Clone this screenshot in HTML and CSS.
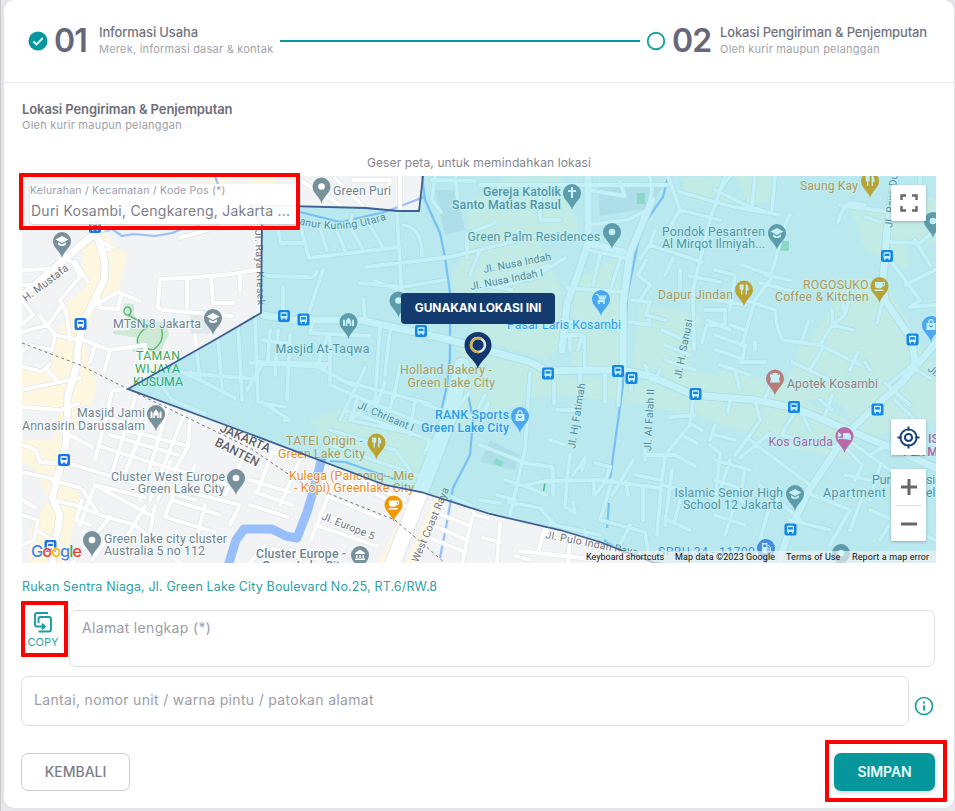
FILE: index.html
```html
<!DOCTYPE html>
<html lang="id">
<head>
<meta charset="utf-8">
<title>Lokasi Pengiriman &amp; Penjemputan</title>
<link rel="stylesheet" href="styles.css">
</head>
<body>
<main class="card">
  <header class="stepper">
    <svg class="step-icon" viewBox="0 0 20 20"><circle cx="10" cy="10" r="9.5" fill="#05979c"/><path d="M5.3 10.3l3.2 3.2 6.3-6.5" fill="none" stroke="#fff" stroke-width="1.8"/></svg>
    <span class="step-no">01</span>
    <div class="step-text step-one"><strong>Informasi Usaha</strong><small>Merek, informasi dasar &amp; kontak</small></div>
    <i class="step-line"></i>
    <svg class="step-icon" viewBox="0 0 20 20"><circle cx="10" cy="10" r="8.3" fill="#fff" stroke="#15a0a4" stroke-width="1.9"/></svg>
    <span class="step-no">02</span>
    <div class="step-text step-two"><strong>Lokasi Pengiriman &amp; Penjemputan</strong><small>Oleh kurir maupun pelanggan</small></div>
  </header>

  <section class="content">
    <div class="heading"><h1>Lokasi Pengiriman &amp; Penjemputan</h1><p>Oleh kurir maupun pelanggan</p></div>
    <p class="hint">Geser peta, untuk memindahkan lokasi</p>

    <div class="map">
      <svg class="map-canvas" viewBox="22 176 914 387">
        <defs>
          <path id="drop" d="M0 17C-1.5 10-9 7-9 0A9 9 0 0 1 9 0C9 7 1.5 10 0 17Z"/>
          <g id="dot"><use href="#drop"/><circle r="3.3" fill="#fff"/></g>
          <g id="school"><use href="#drop"/><path d="M-6.500-1.500L0-5 6.500-1.500 0 2ZM-4 1.200V3.500Q0 6.500 4 3.500V1.200L0 3.400Z" fill="#fff"/></g>
          <g id="mosque"><use href="#drop"/><path d="M-5.500 4V-1.500l1-1.500 1 1.500V4ZM3.500 4V-1.500l1-1.500 1 1.500V4ZM-2.800 4V0Q-2.500-2 0-4.500 2.500-2 2.800 0V4H1.200V1.500h-2.400V4Z" fill="#fff"/></g>
          <g id="church"><use href="#drop"/><path d="M-1-6H1V-3H4V-1H1V5H-1V-1H-4V-3H-1Z" fill="#fff"/></g>
          <g id="fork"><use href="#drop"/><path d="M-3.700-5V-1.500Q-3.700 0-2.300 0T-1-1.500V-5M-2.300-5V5M2.300 5V-4.500Q4-4 4 0H2.300" fill="none" stroke="#fff" stroke-width="1.300"/></g>
          <g id="cup"><use href="#drop"/><path d="M-4.500-4H5.500V-1Q5.500 .500 3 .500 2.500 2.300 .500 2.300H-1.500Q-4.500 2.300-4.500-.500ZM3.300-3V-.700H4.500V-3ZM-5 3.500H4V5H-5Z" fill="#fff"/></g>
          <g id="cart"><use href="#drop"/><path d="M-5.500-4.500h2l.8 1.500H5L3 1.300H-2.200L-3 2.600H4" fill="none" stroke="#fff" stroke-width="1.200"/><path d="M-2.500-2.500H4L2.600.6H-1.500Z" fill="#fff"/><circle cx="-2" cy="4.300" r="1" fill="#fff"/><circle cx="3" cy="4.300" r="1" fill="#fff"/></g>
          <g id="bag"><use href="#drop"/><path d="M-4.500-2H4.500V5H-4.500Z" fill="#fff"/><path d="M-2.200-2Q-2.200-5.300 0-5.300T2.200-2" fill="none" stroke="#fff" stroke-width="1.200"/><path d="M-2 .5Q0 3.500 2 .5" fill="none" stroke="#4285f4"/></g>
          <g id="bed"><use href="#drop"/><path d="M-6-4V4M-6 2.300H6V4M-5-2.500a1.500 1.500 0 1 0 .1 0M-1-2.500H4Q6-2.500 6 0V1.500H-1Z" fill="#fff" stroke="#fff" stroke-width=".8"/></g>
          <g id="med"><use href="#drop"/><path d="M-5-4H-2L-3-5.500H3L2-4H5V-2L4 0 5 4H-5L-4 0-5-2Z" fill="#fff"/></g>
          <g id="fuel"><use href="#drop"/><path d="M-4-5H1.500V5H-4Z" fill="#fff"/><path d="M2-3L4.500-1V3.500H3V0H1" fill="none" stroke="#fff"/><path d="M-2.800-3.500H.3V-1H-2.800Z" fill="#5b7bdc"/></g>
          <g id="museum"><use href="#drop"/><path d="M-5-2L0-5.500 5-2V-1H-5ZM-4 0h1.500v3H-4ZM-.7 0h1.500v3H-.7ZM2.500 0H4v3H2.500ZM-5 3.600H5V5H-5Z" fill="#fff"/></g>
          <g id="bus"><rect x="-6" y="-6" width="12" height="12" rx="2" fill="#1a73e8"/><path d="M-3.500-3.500Q0-4.500 3.500-3.500V2.500H2.800V4H1.500V2.500H-1.500V4H-2.800V2.500H-3.500Z" fill="#fff"/><path d="M-2.400-2.300H2.400V0H-2.400Z" fill="#1a73e8"/></g>
          <g id="minor">
            <path d="M22 270L52 269M60 258L73 262 80 277 60 300 66 312 70 340M75 262L88 282M22 285L44 285M100 252L112 248M102 242L110 246M160 279L187 278 232 274 262 269M160 279L158 306Q158 310 164 310L232 316M187 279V308M211 277L213 303 233 303M240 273V290M180 238L225 225 262 222M98 296L100 308 118 309 121 296M90 308L118 292 140 301M62 305L48 325 22 332M40 316L55 335 80 340M55 335L52 350 30 345 22 352M78 338L110 350 145 345M110 350L104 372M95 345L90 362M145 348L150 366M22 300L33 315 22 324M22 366L42 372 50 364"/>
            <path d="M22 390L50 384 80 378M22 407L60 410 78 404M48 370L58 382M125 389L112 391 106 418 95 460M22 428L110 426 188 446M22 445L36 450 40 462 75 465 100 473 150 487 195 500M22 472L58 480M52 500L75 505 100 515 135 525M82 500L76 520 90 525M135 398L113 470M150 412L122 480M168 408L140 500M185 412L150 500M106 418L135 425M102 447L175 470M110 435L178 455M190 420L188 446 175 470M83 490L97 512M95 485L150 515M80 525L95 485 145 497M22 515L38 520 34 540 22 545M22 500L36 508M36 530L60 545M60 430L92 447M52 480L80 488M145 506L125 540M155 506L150 532M170 462L158 500M180 472L170 505M110 517L72 563M135 525L180 563M92 560L110 535M262 402L290 420 284 420M247 390L262 365M155 376L172 400 205 414M160 362L200 380 235 398M195 335L200 380M218 338L222 390M238 325L242 400M255 316L258 402M175 372L255 379M250 363L325 367M262 340L290 344M258 402L285 407"/>
            <path d="M175 485L172 500 220 515M178 470L225 484M170 502L165 517 215 532M188 492L240 505M195 465L190 480M205 505L195 545M240 505L230 525M250 445L225 495M260 448L290 458M250 480L290 492M255 492L292 505M250 505L288 517M272 453L258 490M300 460L280 505M300 555L300 563M330 492L311 540M327 496L380 518M320 513L345 523M315 525L377 546M345 482L410 508M340 468L395 495M365 483L405 500M265 545L250 563M272 548L300 557M290 550L320 560M500 523L497 563M483 538L500 542M544 530L538 553 520 551M538 553L600 560M570 538L568 563M530 560L515 556M452 497L470 505 475 515M437 513L470 526M432 525L467 540M430 538L465 552M472 518L462 563M474 515L488 518"/>
            <path d="M278 230L281 243 305 243M300 225L309 258 400 247M320 228L327 250M336 229L345 250M352 229L362 248M370 226L383 247M397 213L403 320M268 276L308 277Q315 279 317 271M323 270L307 318M283 288V318M366 267L450 257 540 235M360 283L403 287 445 280M375 281L405 292M404 225Q422 228 422 255M353 180H390L388 195M300 180L340 205M335 178L362 205M435 176L432 200 441 212M432 180L475 181M400 176V211M350 225L352 215M363 298L365 318M313 320L310 333 370 336M270 330L268 360M290 335L287 400M255 362L330 364M380 327L375 400 350 420 410 433M390 330L385 375M365 368L340 420M400 365L394 398M278 330L275 375M330 338L330 385 365 400 430 427M340 380L430 404M320 368L352 385M350 420L358 398M318 363L328 335M425 404L440 410M385 383L375 408M395 390L388 415M415 400L410 435M330 430L395 450 410 470M345 410L430 440 425 453M325 443L430 480M470 392L455 410M485 395L475 415M465 415L482 420 488 403"/>
            <path d="M667 185L480 185M588 190L625 196 620 182M540 185L540 220 560 220M588 225L627 220 648 210 652 190 650 176M588 250L625 258M600 255L593 285M620 260L608 297M567 288L623 292M567 330L560 345M570 337L570 350M578 350L582 335 562 335 562 345M584 337L585 370M480 285L512 290M562 320L620 330M500 287L530 278M515 283L548 265M530 280L565 258M480 250L470 275M495 223L467 234 467 258M455 176L458 202M500 185L495 198 515 210M668 176L680 210 720 220M680 192L730 206 767 213M680 210L667 232M725 176L710 220 700 260 693 290 694 350M655 230L650 245 702 262M650 245L640 258M673 258L665 275M680 270V290M690 276L720 282M646 260L638 275 650 285 640 300M632 300L650 302 646 315 665 320M648 315L650 325 630 322M705 310H725V325H707L702 342M707 320L730 330M665 345L690 355M665 360L695 370M662 330L680 338M554 380V404M605 375V402M580 370V383M620 375L618 405M557 410H580M631 383V390M550 440L565 445M660 370L655 382M645 365L651 380M530 373L525 450 510 515M480 445L525 463 552 467 553 495M553 468L553 492M505 480L530 488 546 495M497 495L515 500M526 485L545 481 600 480 660 488M570 455L567 480 565 508M568 508L575 513 573 502M582 470L585 458 573 475M595 463L610 467 605 482 595 495M594 482V495M633 460L620 482 612 495M626 482L628 495M645 450V460M645 455L675 455 695 466M694 395L690 425 665 455 662 478 657 535M636 475L660 480M663 485L720 500M672 470L665 525M612 480L600 520 645 532 650 563M630 525L620 545M508 502L540 508 555 525 600 535M480 500L500 503M552 520L545 535M670 417L695 415M693 425L702 430M685 437L697 443M715 425L710 440M710 445L720 453M643 488V520M585 530L587 545M668 520L690 530M680 500L675 520"/>
            <path d="M715 190L750 207 778 215M730 176L720 190M755 176L752 208M775 176L772 210M790 215L783 230 770 280 755 300 742 345M760 283L792 291M790 280L765 275M742 265L770 275M715 270L735 275 730 310M715 300L745 305M745 300L775 310 777 325M730 325L745 330M777 325L782 340 820 345 860 365M820 345L832 325 845 315 850 295M832 325L853 330M833 325L832 310M845 315L842 300 852 285M802 340L808 322M745 345L742 362M755 350V342M850 370L858 352M870 370L865 362M823 348L810 370M792 362L830 380M742 345L715 335M740 362L765 362M883 300L877 323M865 205L850 203Q842 208 838 222M840 205L890 212M865 217L880 222M920 176V195L905 210M885 242L920 243 935 230M890 260L920 300 910 307 935 305M905 285L935 270M915 240L930 265M915 363L890 383M912 367L930 378M720 365L750 375M735 370L740 390M775 375L765 398M755 400L760 420 750 435 735 455M795 413L785 428 782 435 810 442 848 450 862 465 855 480M770 433L740 458M715 435L735 440M750 440L810 485M715 460L750 470M720 455L715 500M730 460L720 490M745 468L740 500 760 510M715 480L745 490M760 485L800 520M808 493L850 510 830 545M790 520L830 530M848 440L890 470 935 480M870 455L905 435 935 445M880 465L870 500M845 475L870 480M865 490L850 530M900 475L915 530 935 540M870 510L905 525M905 500L880 540M770 505L760 540M735 505L725 535M715 515L745 525M885 383L910 405M895 400L915 420M820 400L832 410M825 415L832 395M800 410L810 430M730 400L728 412M716 350L740 358"/>
          </g>
          <g id="major">
            <path d="M95 232Q108 260 104 280L85 320Q76 345 77 365L68 395 66 445 58 475 52 498 60 515 52 563"/>
            <path d="M263 315L293 320 360 320 397 328 450 340 530 362 547 371 590 370 623 370 653 377 693 395 755 400 795 408 848 430 892 448 936 468"/>
            <path d="M895 176L887 230 883 280 885 300 912 340 915 363"/>
            <path d="M936 343L902 382 848 432 808 492 788 535 778 563"/>
            <path d="M588 176V243L577 277 567 303 562 350"/>
            <path d="M588 243L623 252"/><path d="M652 200L630 253 623 303V370"/>
            <path d="M22 296L95 233 130 210"/>
          </g>
          <path id="area" d="M423 176L419 211H398L366 208 250 205 262 225 261 313 218 338 128 389 250 434 385 485 421 492 490 514 560 530 600 542 636 556 655 563 960 590V160H423Z"/>
        </defs>
        <path fill="#f1f3f4" d="M22 176H936V563H22Z"/>
        <g class="built">
          <path d="M105 232L118 250 128 253 122 275 118 292 102 298 92 320 84 335 88 360 97 385 93 402 78 408 74 435 60 475 80 495 75 520 66 563H30V530L48 500 36 470 22 462V440L55 440 58 410 22 405V368H52L55 335 68 318 68 300 85 290 82 250Z"/>
          <path d="M250 176H262L275 176V190H250ZM190 176H240L220 184Z"/>
          <path d="M411 495L390 540 378 563H398L425 500ZM436 496L448 490 418 563H405Z"/>
        </g>
        <path class="built-soft" d="M466 204L505 178 560 176 580 230 540 245 560 285 563 345 545 360 480 340 450 280 470 240ZM460 340L530 362 560 376 720 385 795 398 848 420 860 440 850 460 790 448 740 430 700 417 620 400 540 395 450 435 420 490 375 482 335 468 310 420 340 410 430 435 450 390ZM575 280L620 255 620 370 570 370ZM632 370L640 302 700 315 690 370 760 385 735 395 660 380ZM680 178L720 176 730 205 690 200ZM735 176H775V200L750 205ZM850 205L900 212 910 270 865 250ZM845 278L885 280 912 330 936 370V420L860 440 840 400 780 398 792 370 830 310ZM848 320L895 310 910 355 880 375ZM715 370L795 385 815 410 740 400ZM800 345L860 365 840 405 790 385ZM900 190L936 200V245L895 235Z"/>
        <path fill="#e2e8eb" d="M598 188L665 183 650 208 600 216ZM490 440L520 455 515 470 480 462ZM435 190L455 190 465 230 445 235ZM190 310h20v24h-20Z"/>
        <g fill="#ceead6"><path d="M124 303L134 304V317L166 323 169 335 160 352H132L138 338 113 334V331L130 330Z"/><path d="M637 193h8v11h-8ZM780 241h9v10h-9ZM496 458l8 4-3 5-8-4Z" fill="#b5dfc0"/></g>
        <path d="M127 315a3.500 4 0 1 1 1 0L148 326Q132 338 140 347L153 350Q167 340 160 325M545 483L543 494" fill="none" stroke="#5bb974" stroke-width="1.500"/>
        <g class="water"><path d="M422 176L425 200 440 233 445 257 450 293V357L447 385 442 408M668 176L663 197 643 225 637 247 627 297 623 385 615 442 610 480M609 503L607 528M604 540L613 546M330 461L345 462 397 480M300 212L340 222 385 212 424 197M95 234L112 229 122 236 134 234 155 236 172 233 185 228 200 226M215 176L218 184M468 393L473 420 470 455 453 488 447 522 440 558M44 285L28 292" stroke-width="2.200"/></g>
        <g fill="none" stroke-linecap="round" stroke-linejoin="round">
          <path d="M462 365L450 415 427 475 393 563" stroke="#e3e5e8" stroke-width="17"/>
          <use href="#minor" stroke="#e1e4e8" stroke-width="5"/>
          <use href="#major" stroke="#dfe2e6" stroke-width="8.500"/>
          <use href="#minor" stroke="#fff" stroke-width="3.800"/>
          <use href="#major" stroke="#fff" stroke-width="7"/>
          <path d="M462 365L450 415 427 475 393 563" stroke="#fff" stroke-width="15"/>
        </g>
        <g class="water"><path d="M322 458L313 492 307 512 297 538 286 536 272 529 244 529 236 540 228 566" stroke-width="9"/></g>
        <path d="M22 343L80 365 128 389 250 448 300 482 395 520 445 563" fill="none" stroke="#777b80" stroke-dasharray="3 3"/>

        <g class="street">
          <text transform="translate(26 302) rotate(-37)" textLength="54">H. Mustafa</text>
          <text transform="translate(255 230) rotate(88)" textLength="75">Jl. Raya Kresek</text>
          <path id="janur" d="M299 224Q340 236 388 219" fill="none" stroke="none"/><text textLength="89"><textPath href="#janur">anur Kuning Utara</textPath></text>
          <text transform="translate(484 273) rotate(-11)" textLength="69">Jl. Nusa Indah</text>
          <text transform="translate(471 290) rotate(-11)" textLength="74">Jl. Nusa Indah I</text>
          <text transform="translate(681 379) rotate(-79)" textLength="60">Jl. H. Sanusi</text>
          <text transform="translate(575 449) rotate(-81)" textLength="66">Jl. Hj Fatimah</text>
          <text transform="translate(651 451) rotate(-87)" textLength="62">Jl. Al Falah II</text>
          <text transform="translate(357 408) rotate(23)" textLength="60">Jl. Chrisant I</text>
          <text transform="translate(321 519) rotate(22)" textLength="56">Jl. Europe 5</text>
          <text transform="translate(418 563) rotate(-67)" textLength="80">West Coast Raya</text>
          <text transform="translate(545 538) rotate(11)" textLength="94">Jl. Pulo Indah Raya</text>
          <text transform="translate(892 228) rotate(-84)" textLength="61">Jl. Raya Duri</text>
          <text transform="translate(927 370) rotate(40)">Jl. K</text>
          <g class="city"><text transform="translate(219 431) rotate(24)" textLength="54">JAKARTA</text><text transform="translate(214 445) rotate(27)" textLength="48">BANTEN</text></g>
        </g>

        <g class="label grey">
          <text x="333" y="195" textLength="58">Green Puri</text>
          <text x="483" y="196" textLength="78" class="mid">Gereja Katolik</text><text x="452" y="208.500" textLength="109" class="mid">Santo Matias Rasul</text>
          <text x="467.500" y="241" textLength="132.500">Green Palm Residences</text>
          <text x="662" y="235.500" textLength="103">Pondok Pesantren</text><text x="662" y="248" textLength="103">Al Mirqot Ilmiyah...</text>
          <text x="113" y="327.500" textLength="88">MTsN 8 Jakarta</text>
          <text x="275.500" y="352.500" textLength="94">Masjid At-Taqwa</text>
          <text x="77" y="417" textLength="68">Masjid Jami</text><text x="22" y="430" textLength="123">Annasirin Darussalam</text>
          <text x="111" y="480.500" textLength="114">Cluster West Europe</text><text x="131" y="493" textLength="93.500">- Green Lake City</text>
          <text x="104" y="543" textLength="123">Green lake city cluster</text><text x="104" y="555" textLength="101">Australia 5 no 112</text>
          <text x="256" y="558" textLength="90" class="mid">Cluster Europe -</text><text x="262" y="570" textLength="84" class="mid">Green Lake City</text>
          <text x="674.500" y="497" textLength="108.500">Islamic Senior High</text><text x="683" y="509" textLength="100">School 12 Jakarta</text>
          <text x="872" y="484">Puri</text><text x="926" y="484">sid</text><text x="823" y="496.500" textLength="74">Apartment b</text><text x="926" y="496.500">el</text>
        </g>
        <g class="label green"><text x="136" y="360" textLength="44">TAMAN</text><text x="135" y="373" textLength="45">WIJAYA</text><text x="133" y="385.500" textLength="50">KUSUMA</text></g>
        <g class="label orange">
          <text x="800" y="190" textLength="58">Saung Kay</text><text x="658" y="298.500" textLength="75">Dapur Jindan</text>
          <text x="803" y="288.500" textLength="65.500">ROGOSUKO</text><text x="775" y="301" textLength="93.500">Coffee &amp; Kitchen</text>
          <text x="400" y="374" textLength="92">Holland Bakery -</text><text x="407.500" y="386.500" textLength="87.500">Green Lake City</text>
          <text x="286" y="445" textLength="77">TATEI Origin -</text><text x="278" y="458" textLength="87">Green Lake City</text>
          <text x="289" y="480" textLength="125">Kulega (Pancong - Mie</text><text x="294" y="492" textLength="120">- Kopi) Greenlake City</text>
        </g>
        <g class="label blue"><text x="507" y="329" textLength="114">Pasar Laris Kosambi</text><text x="435" y="419" textLength="74" class="mid">RANK Sports</text><text x="421" y="431.500" textLength="88" class="mid">Green Lake City</text><text x="658" y="556" textLength="97" fill="#5b7bdc">SPBU 34 - 11700</text></g>
        <text class="label red" x="787" y="387.500" textLength="91">Apotek Kosambi</text>
        <g class="label pink"><text x="768.500" y="445.500" textLength="64.500">Kos Garuda</text><text x="928" y="443" class="mid">IS</text><text x="903" y="456" class="mid" textLength="35">PER M</text></g>

        <g fill="#78909c">
          <use href="#school" x="62" y="241"/><use href="#school" x="213" y="318"/><use href="#dot" x="321.500" y="186.500"/><use href="#dot" x="398.500" y="300.500"/><use href="#mosque" x="348.500" y="322"/><use href="#church" x="572" y="193"/><use href="#dot" x="612" y="232"/><use href="#school" x="777" y="233"/><use href="#dot" x="933" y="221"/><use href="#school" x="795" y="494"/><use href="#mosque" x="156" y="414"/><use href="#dot" x="236" y="478"/><use href="#dot" x="92" y="540"/><use href="#museum" x="360" y="555"/><use href="#dot" x="841" y="553"/>
        </g>
        <g fill="#f29900"><use href="#fork" x="870" y="181"/><use href="#fork" x="744" y="289.500"/><use href="#cup" x="879.500" y="286"/><use href="#fork" x="376.500" y="442.500"/><use href="#cup" x="393.500" y="504.500"/></g>
        <g fill="#5f9ffa"><use href="#cart" x="601" y="299"/><use href="#bag" x="520" y="416"/><use href="#bag" x="931" y="325"/></g>
        <use href="#med" x="775" y="378.500" fill="#ee675c"/><use href="#bed" x="844.500" y="436" fill="#ee4f9a"/><use href="#fuel" x="766" y="548" fill="#5b7bdc"/>
        <g><use href="#bus" x="80.500" y="324"/><use href="#bus" x="284" y="316"/><use href="#bus" x="303.500" y="319.500"/><use href="#bus" x="421" y="331"/><use href="#bus" x="548" y="373.500"/><use href="#bus" x="618" y="371"/><use href="#bus" x="631.500" y="378"/><use href="#bus" x="695.500" y="394"/><use href="#bus" x="794" y="407"/><use href="#bus" x="877.500" y="409.500"/><use href="#bus" x="887" y="256"/><use href="#bus" x="912.500" y="339.500"/><use href="#bus" x="790.500" y="529.500"/><use href="#bus" x="64" y="460"/><use href="#bus" x="50.500" y="546"/><use href="#bus" x="95" y="227"/></g>
        <use href="#area" fill="#09c4dc" fill-opacity=".24" stroke="#3f5f92" stroke-width="1.800"/>
        <g transform="translate(478 345)"><path d="M0 24C-2 15-13.500 11-13.500-0A13.500 13 0 0 1 13.500 0C13.500 11 2 15 0 24Z" fill="#12376c"/><circle r="7" fill="#12376c" stroke="#dfe8ea" stroke-width="2.600"/><path d="M3.500-6A7 7 0 1 0 1 7" fill="none" stroke="#d3b552" stroke-width="2.400"/></g>
      </svg>
      <div class="area-field"><label>Kelurahan / Kecamatan / Kode Pos (*)</label><span>Duri Kosambi, Cengkareng, Jakarta ...</span></div>
      <button class="use-location">GUNAKAN LOKASI INI</button>
      <button class="map-btn fullscreen"><svg viewBox="0 0 18 18"><path d="M1.500 6V1.500H6M12 1.500h4.500V6M16.500 12v4.500H12M6 16.500H1.500V12" fill="none" stroke="#666" stroke-width="2.400"/></svg></button>
      <button class="map-btn locate"><svg viewBox="0 0 24 24"><g fill="none" stroke="#174579"><circle cx="12" cy="12" r="8.500" stroke-width="2"/><circle cx="12" cy="12" r="3.700" stroke-width="2.200"/><path d="M12 .500V5M12 19v4.500M.500 12H5M19 12h4.500" stroke-width="2"/></g></svg></button>
      <div class="zoom"><svg viewBox="0 0 16 16"><path d="M0 8H16M8 0V16" stroke="#666" stroke-width="3"/></svg><i></i><svg viewBox="0 0 16 16"><path d="M0 8H16" stroke="#666" stroke-width="3"/></svg></div>
      <div class="google"><b>G</b><b>o</b><b>o</b><b>g</b><b>l</b><b>e</b></div>
      <div class="credits"><span class="c1">Keyboard shortcuts</span><span class="c2">Map data ©2023 Google</span><span class="c3">Terms of Use</span><span class="c4">Report a map error</span></div>
    </div>

    <p class="address">Rukan Sentra Niaga, Jl. Green Lake City Boulevard No.25, RT.6/RW.8</p>
    <div class="row full-address">
      <button class="copy"><svg viewBox="0 0 18 21"><path d="M14 1H3Q1 1 1 3V12.500Q1 14.500 3 14.500H10.500M8 11.800L10.800 14.500 8 17.200M4.500 11V7Q4.500 5 6.500 5H15Q17 5 17 7V17.500Q17 19.500 15 19.500H4.500" fill="none" stroke="#179fa3" stroke-width="1.900"/></svg><span>COPY</span></button>
      <div class="field area">Alamat lengkap (*)</div>
    </div>
    <div class="row details">
      <div class="field line">Lantai, nomor unit / warna pintu / patokan alamat</div>
      <svg class="info" viewBox="0 0 20 20"><circle cx="10" cy="10" r="8.500" fill="none" stroke="#16a0a4" stroke-width="1.700"/><path d="M10 9.200V14.500M10 5.500V7.500" stroke="#16a0a4" stroke-width="1.900"/></svg>
    </div>
    <footer class="row actions"><button class="back">KEMBALI</button><button class="save">SIMPAN</button></footer>
  </section>
</main>
<i class="mark mark-area"></i><i class="mark mark-copy"></i><i class="mark mark-save"></i>
</body>
</html>
```
FILE: styles.css
```css
* { box-sizing: border-box; }
body { margin: 0; width: 955px; height: 811px; overflow: hidden; position: relative; background: #e8e8ec; border-left: 1px solid #c9c9ce; font-family: Inter, "Liberation Sans", sans-serif; color: #6e7080; }
p, h1 { margin: 0; }
button { font-family: inherit; padding: 0; border: 0; cursor: pointer; }
svg { display: block; }
.card { margin: 0 1px 0 3px; height: 808px; background: #fff; border-radius: 10px; box-shadow: 0 0 3px #d5d5db; }

.stepper { height: 83px; border-bottom: 1px solid #e9e9ec; padding: 0 0 0 24px; display: flex; align-items: center; }
.step-icon { width: 20px; height: 20px; flex: none; }
.step-no { font-size: 32px; line-height: 40px; font-weight: 600; color: #65677b; width: 43px; margin-left: 6px; letter-spacing: -.8px; flex: none; }
.step-text { display: flex; flex-direction: column; white-space: nowrap; flex: none; padding-bottom: 2px; }
.step-text strong { font-size: 13px; line-height: 17px; font-weight: 500; color: #73747f; letter-spacing: -.13px; }
.step-text small { font-size: 11px; line-height: 16px; color: #a2a3aa; letter-spacing: .23px; }
.step-one { width: 175px; margin-left: 2px; }
.step-two { margin-left: 5px; }
.step-line { width: 360px; height: 2px; background: #05979c; margin: 0 6px 0 6px; flex: none; }

.content { padding: 0 18px; }
.heading { padding-top: 18px; height: 71px; }
.heading h1 { font-size: 13px; line-height: 17px; font-weight: 600; color: #6d6e7a; letter-spacing: -.09px; }
.heading p { font-size: 11px; line-height: 15px; color: #a0a1a8; letter-spacing: .23px; }
.hint { height: 22px; line-height: 17px; font-size: 12px; letter-spacing: .12px; text-align: center; color: #85868e; }

.map { position: relative; height: 387px; overflow: hidden; width: 914px; }
.map-canvas { width: 914px; height: 387px; }
.built { fill: #fef7e0; }
.built-soft { fill: #fdf8e8; }
.water { fill: none; stroke: #98bffb; stroke-linejoin: round; }
.label, .street { font-family: Roboto, sans-serif; font-size: 12.3px; paint-order: stroke; stroke: rgba(255,255,255,.75); stroke-width: 2px; stroke-linejoin: round; }
.street { font-size: 10.5px; fill: #70757a; }
.city { font-size: 12.5px; font-weight: 500; fill: #5f6368; }
.mid { font-weight: 500; }
.grey { fill: #6c8590; }
.green { fill: #34a853; }
.orange { fill: #e78b25; }
.blue { fill: #3b8df0; }
.red { fill: #d2665f; }
.pink { fill: #dc478c; }

.area-field { position: absolute; left: 8px; top: 8px; width: 267px; height: 40px; background: rgba(255,255,255,.94); border-radius: 4px; display: flex; flex-direction: column; white-space: nowrap; box-shadow: 0 1px 2px #ccc; }
.area-field label { font-size: 10.5px; line-height: 14px; color: #9b9caa; letter-spacing: .23px; }
.area-field span { font-size: 14px; line-height: 26px; color: #7c7e8c; letter-spacing: .25px; padding-left: 1px; }
.use-location { position: absolute; left: 379px; top: 117px; width: 154px; height: 31px; padding-bottom: 2px; border-radius: 4px; background: #143b70; color: #fff; font-size: 12px; font-weight: 700; letter-spacing: -.12px; }
.map-btn { position: absolute; left: 869px; width: 35px; height: 36px; background: #fff; border-radius: 1px; box-shadow: 0 1px 3px rgba(0,0,0,.25); display: grid; place-items: center; }
.fullscreen { top: 9px; }
.fullscreen svg { width: 18px; height: 18px; }
.locate { top: 243px; }
.locate svg { width: 23px; height: 23px; }
.zoom { position: absolute; left: 869px; top: 293px; width: 35px; height: 72px; background: #fff; border-radius: 1px; box-shadow: 0 1px 3px rgba(0,0,0,.25); display: flex; flex-direction: column; align-items: center; justify-content: space-between; padding: 10px 0 9px; }
.zoom svg { width: 16px; height: 16px; }
.zoom i { width: 27px; height: 1px; background: #e3e3e3; }
.google { position: absolute; left: 9px; bottom: 2px; font-size: 16.5px; line-height: 20px; letter-spacing: -1.1px; display: flex; text-shadow: 0 0 2px #fff, 0 0 2px #fff; }
.google b { font-weight: 500; color: #4285f4; }
.google b:nth-child(2), .google b:nth-child(6) { color: #ea4335; }
.google b:nth-child(3) { color: #fbbc05; }
.google b:nth-child(5) { color: #34a853; }
.credits { position: absolute; right: 0; bottom: 0; width: 353px; height: 12px; background: rgba(245,245,245,.65); display: flex; font: 9px/12px Roboto, sans-serif; color: #111; white-space: nowrap; }
.c1 { width: 89px; padding-left: 3px; }
.c2 { width: 111px; padding-left: 3px; letter-spacing: .1px; }
.c3 { width: 67px; padding-left: 3px; letter-spacing: .1px; }
.c4 { padding-left: 2px; letter-spacing: .12px; }

.address { height: 47px; padding-top: 15px; font-size: 12.5px; line-height: 17px; letter-spacing: .15px; color: #2fa0a3; white-space: nowrap; }
.row { display: flex; width: 914px; margin-left: -1px; }
.field { border: 1px solid #dedfe3; border-radius: 7px; color: #9c9da6; font-size: 14px; letter-spacing: .33px; white-space: nowrap; }
.full-address { height: 66px; }
.copy { width: 44px; margin-right: 4px; background: none; display: flex; flex-direction: column; align-items: center; padding-top: 2px; }
.copy svg { width: 18px; height: 21px; }
.copy span { color: #2da2a5; font-size: 11px; line-height: 19px; }
.area { width: 866px; height: 57px; line-height: 20px; padding: 7px 12px; }
.line { width: 888px; height: 50px; line-height: 46px; padding-left: 12px; }
.details { height: 77px; }
.info { width: 20px; height: 20px; margin: 20px 0 0 5px; }
.actions { justify-content: space-between; }
.back { width: 109px; height: 38px; padding-bottom: 2px; background: #fff; border: 1px solid #cbcdd4; border-radius: 7px; color: #7b7e8b; font-size: 14px; font-weight: 500; }
.save { width: 101px; height: 38px; padding-bottom: 2px; background: #05979c; border-radius: 7px; color: #ecfafa; font-size: 14px; font-weight: 600; letter-spacing: -.1px; box-shadow: 0 2px 4px rgba(0,0,0,.15); }

.mark { position: absolute; border: 4px solid #f00; border-radius: 1px; }
.mark-area { left: 18px; top: 173px; width: 281px; height: 57px; }
.mark-copy { left: 20px; top: 601px; width: 47px; height: 56px; }
.mark-save { left: 824px; top: 740px; width: 122px; height: 62px; }
```
